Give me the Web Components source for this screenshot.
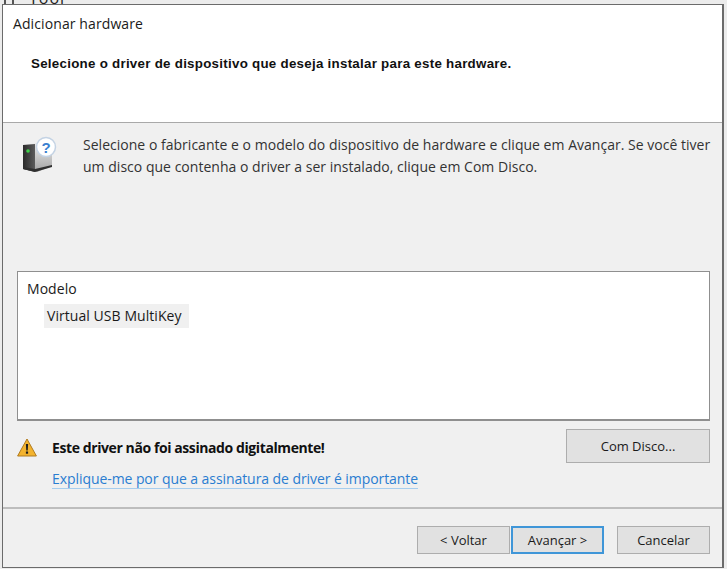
<!DOCTYPE html>
<html lang="pt">
<head>
<meta charset="utf-8">
<title>Adicionar hardware</title>
<style>
    html, body { margin: 0; padding: 0; height: 100%; background: #ececec; overflow: hidden; }
    body { font-family: "Open Sans", "Noto Sans", sans-serif; }
</style>
</head>
<body>
<wizard-dialog>
    <span slot="title">Adicionar hardware</span>
    <span slot="subtitle">Selecione o driver de dispositivo que deseja instalar para este hardware.</span>
    <span slot="intro">Selecione o fabricante e o modelo do dispositivo de hardware e clique em Avançar. Se você tiver<br>um disco que contenha o driver a ser instalado, clique em Com Disco.</span>
    <model-list slot="list" heading="Modelo">
        <span>Virtual USB MultiKey</span>
    </model-list>
    <span slot="warning">Este driver não foi assinado digitalmente!</span>
    <span slot="link">Explique-me por que a assinatura de driver é importante</span>
    <win-button slot="disk" style="width:144px;height:34px">Com Disco...</win-button>
    <win-button slot="nav" style="width:93px">&lt; Voltar</win-button>
    <win-button slot="nav" focused style="width:93px;margin-left:1px">Avançar &gt;</win-button>
    <win-button slot="nav" style="width:93px;margin-left:13px">Cancelar</win-button>
</wizard-dialog>

<script>
class WinButton extends HTMLElement {
    constructor() {
        super();
        this.attachShadow({ mode: 'open' });
        this.shadowRoot.innerHTML = `
            <style>
                :host {
                    display: flex;
                    align-items: center;
                    justify-content: center;
                    box-sizing: border-box;
                    height: 28px;
                    background: #e1e1e1;
                    border: 1px solid #adadad;
                    color: #1a1a1a;
                    font-size: 13px;
                    white-space: nowrap;
                }
                :host([focused]) {
                    border: 2px solid #3f96d8;
                }
            </style>
            <slot></slot>
        `;
    }
}

class ModelList extends HTMLElement {
    constructor() {
        super();
        this.attachShadow({ mode: 'open' });
        this.shadowRoot.innerHTML = `
            <style>
                :host {
                    display: block;
                    box-sizing: border-box;
                    height: 150px;
                    background: #fff;
                    border: 1px solid #8f8f8f;
                    border-bottom-width: 2px;
                    padding: 7px 0 0 9px;
                    font-size: 14px;
                    color: #1a1a1a;
                }
                #head { line-height: 20px; letter-spacing: 0.05px; }
                #rows { margin: 5px 0 0 17px; }
                ::slotted(span) {
                    display: inline-block;
                    background: #f0f0f0;
                    padding: 0 7px 0 3px;
                    line-height: 24px;
                    letter-spacing: 0.06px;
                }
            </style>
            <div id="head"></div>
            <div id="rows"><slot></slot></div>
        `;
    }

    connectedCallback() {
        this.shadowRoot.getElementById('head').textContent = this.getAttribute('heading');
    }
}

class WizardDialog extends HTMLElement {
    constructor() {
        super();
        this.attachShadow({ mode: 'open' });
        this.shadowRoot.innerHTML = `
            <style>
                :host {
                    display: flex;
                    flex-direction: column;
                    height: 569px;
                    box-sizing: border-box;
                }
                #behind {
                    height: 4px;
                    overflow: hidden;
                    display: flex;
                    align-items: flex-end;
                    gap: 13px;
                    padding-left: 4px;
                    color: #222;
                    font-size: 16px;
                    flex: none;
                }
                #behind svg { flex: none; }
                #behind span { line-height: 11px; letter-spacing: 1px; }
                #window {
                    margin: 0 3px 1px 2px;
                    flex: 1;
                    border: 1px solid #6b6b6b;
                    border-width: 1px 2px 1px 1px;
                    display: flex;
                    flex-direction: column;
                    background: #f0f0f0;
                    min-height: 0;
                }
                header {
                    height: 117px;
                    flex: none;
                    background: #fff;
                    border-bottom: 1px solid #a9a9a9;
                    box-sizing: content-box;
                    padding-left: 10px;
                }
                #title {
                    margin-top: 9px;
                    font-size: 14px;
                    line-height: 20px;
                    letter-spacing: 0.1px;
                    color: #1a1a1a;
                }
                #subtitle {
                    margin: 20px 0 0 18px;
                    font: bold 13.33px/20px "Liberation Sans", Arial, sans-serif;
                    letter-spacing: 0.27px;
                    color: #111;
                }
                #intro {
                    display: flex;
                    padding: 11px 0 0 20px;
                    height: 135px;
                    box-sizing: border-box;
                    flex: none;
                    font-size: 14px;
                    line-height: 22px;
                    letter-spacing: 0.02px;
                    color: #333;
                }
                #intro svg { flex: none; margin-top: 2px; }
                #intro div { margin-left: 26px; }
                #content {
                    flex: 1;
                    padding: 13px 12px 0 14px;
                    display: flex;
                    flex-direction: column;
                }
                #warn-row {
                    display: flex;
                    margin-top: 8px;
                    justify-content: space-between;
                }
                #warn {
                    display: grid;
                    grid-template-columns: 20px 1fr;
                    column-gap: 15px;
                    row-gap: 11px;
                    align-items: center;
                    padding-top: 8px;
                    font-size: 14px;
                    line-height: 21px;
                }
                #warn-text { font-weight: 700; color: #111; letter-spacing: -0.41px; }
                #link {
                    grid-column: 2;
                    color: #2a7dd0;
                    border-bottom: 1px solid #a6cdee;
                    line-height: 19px;
                    letter-spacing: -0.07px;
                    justify-self: start;
                }
                footer {
                    border-top: 2px solid #bdbdbd;
                    height: 60px;
                    box-sizing: border-box;
                    flex: none;
                    display: flex;
                    justify-content: flex-end;
                    padding: 17px 12px 0 0;
                }
            </style>
            <div id="behind">
                <svg width="12" height="4"><path d="M1 0v4M9 0v4" stroke="#555" stroke-width="2"/></svg>
                <span>Tool</span>
            </div>
            <div id="window">
                <header>
                    <div id="title"><slot name="title"></slot></div>
                    <div id="subtitle"><slot name="subtitle"></slot></div>
                </header>
                <div id="intro">
                    <svg width="34" height="38" viewBox="0 0 34 38">
                        <defs>
                            <linearGradient id="tower" x1="0" x2="1" y1="0" y2="0">
                                <stop offset="0" stop-color="#2a2a2a"/>
                                <stop offset="1" stop-color="#5c5c5c"/>
                            </linearGradient>
                            <linearGradient id="side" x1="0" x2="0" y1="0" y2="1">
                                <stop offset="0" stop-color="#e8e8e8"/>
                                <stop offset="1" stop-color="#a4a4a4"/>
                            </linearGradient>
                        </defs>
                        <path d="M0 9l14-2 15 3v20l-15 6-14-3z" fill="url(#side)"/>
                        <path d="M0 9l12-1v28l-12-3z" fill="url(#tower)"/>
                        <path d="M0 31l12 2 17-4v2l-17 5-12-3z" fill="#303030"/>
                        <circle cx="5" cy="15" r="1.8" fill="#3fd24a"/>
                        <circle cx="23" cy="11" r="9.500" fill="#fff" stroke="#c4d3e4" stroke-width="1.500"/>
                        <text x="23" y="16.500" text-anchor="middle" font-family="Liberation Sans, sans-serif" font-weight="700" font-size="15" fill="#3b7fd0">?</text>
                    </svg>
                    <div><slot name="intro"></slot></div>
                </div>
                <div id="content">
                    <slot name="list"></slot>
                    <div id="warn-row">
                        <div id="warn">
                            <svg width="20" height="19" viewBox="0 0 20 19">
                                <path d="M10 1L19.400 18H.6z" fill="#f3b32e" stroke="#b07a1e" stroke-linejoin="round"/>
                                <path d="M8.900 6h2.200l-.4 6.500H9.300z" fill="#1c1c1c"/>
                                <rect x="8.900" y="13.500" width="2.200" height="2.200" fill="#1c1c1c"/>
                            </svg>
                            <span id="warn-text"><slot name="warning"></slot></span>
                            <span id="link"><slot name="link"></slot></span>
                        </div>
                        <slot name="disk"></slot>
                    </div>
                </div>
                <footer><slot name="nav"></slot></footer>
            </div>
        `;
    }
}

customElements.define('win-button', WinButton);
customElements.define('model-list', ModelList);
customElements.define('wizard-dialog', WizardDialog);
</script>
</body>
</html>
